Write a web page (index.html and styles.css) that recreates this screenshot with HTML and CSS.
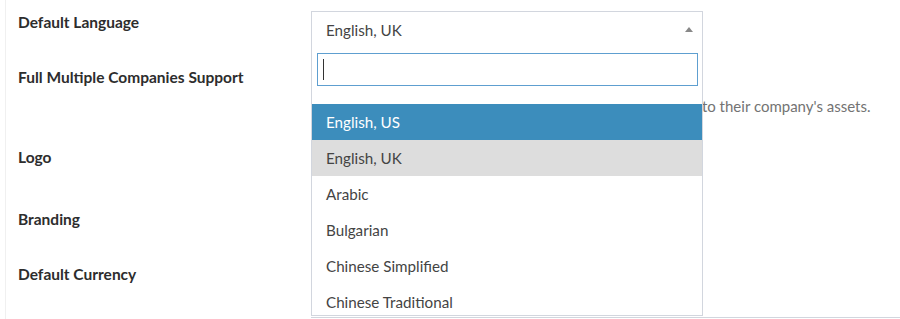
FILE: index.html
```html
<!DOCTYPE html>
<html lang="en">
<head>
  <meta charset="UTF-8" />
  <title>Settings</title>
  <link rel="stylesheet" href="styles.css">
</head>
<body>
  <div class="settings">
    <div class="row row-lang">
      <div class="row-label">Default Language</div>
      <div class="row-control">
        <div class="picker">
          <div class="picker-box">
            <span class="picker-value">English, UK</span>
            <span class="picker-arrow"></span>
          </div>
          <div class="picker-drop">
            <div class="picker-search">
              <div class="search-field"><span class="caret"></span></div>
            </div>
            <ul class="picker-options">
              <li class="is-active">English, US</li>
              <li class="is-selected">English, UK</li>
              <li>Arabic</li>
              <li>Bulgarian</li>
              <li>Chinese Simplified</li>
              <li>Chinese Traditional</li>
              <li>Croatian</li>
            </ul>
          </div>
        </div>
      </div>
    </div>

    <div class="row row-companies">
      <div class="row-label">Full Multiple Companies Support</div>
      <div class="row-control">
        <label class="check"><input type="checkbox"> Full Multiple Companies Support</label>
        <p class="help">Restricting users (including admins) assigned to companies to their company's assets.</p>
      </div>
    </div>

    <div class="row row-logo">
      <div class="row-label">Logo</div>
      <div class="row-control"></div>
    </div>

    <div class="row row-branding">
      <div class="row-label">Branding</div>
      <div class="row-control"></div>
    </div>

    <div class="row row-currency">
      <div class="row-label">Default Currency</div>
      <div class="row-control">
        <div class="currency-field"></div>
      </div>
    </div>
  </div>
</body>
</html>
```

FILE: styles.css
```css
body {
  margin: 0;
  font-family: Lato, 'Open Sans', sans-serif;
  background: #fff;
  color: #333;
  overflow: hidden;
}
.settings {
  margin-left: 5px;
  border-left: 1px solid #f0f0f0;
  padding: 11px 0 0 12px;
  height: 308px;
}
.row {
  display: flex;
}
.row-lang { height: 55px; }
.row-companies { height: 80px; }
.row-logo { height: 62px; }
.row-branding { height: 55px; }
.row-currency { height: 56px; }

.row-label {
  flex: 0 0 293px;
  font-size: 15.5px;
  font-weight: bold;
  line-height: 22px;
  color: #2d2d2d;
}
.row-control {
  flex: 1;
  min-width: 0;
}

/* language picker */
.picker {
  position: relative;
  width: 392px;
}
.picker-box {
  display: flex;
  align-items: center;
  justify-content: space-between;
  height: 36px;
  border: 1px solid #d2d6de;
  padding: 0 9px 0 14px;
  font-size: 15.2px;
  color: #444;
}
.picker-arrow {
  width: 0;
  height: 0;
  border-left: 4px solid transparent;
  border-right: 4px solid transparent;
  border-bottom: 5px solid #888;
  margin-bottom: 1px;
}
.picker-drop {
  position: absolute;
  top: 37px;
  left: 0;
  right: 0;
  z-index: 10;
  background: #fff;
  border: 1px solid #d2d6de;
  border-top: none;
}
.picker-search {
  padding: 5px 4px 18px 5px;
}
.search-field {
  height: 31px;
  border: 1px solid #5e9fd0;
  position: relative;
}
.caret {
  position: absolute;
  left: 5px;
  top: 5px;
  height: 21px;
  border-left: 1px solid #333;
}
.picker-options {
  list-style: none;
  margin: 0;
  padding: 0;
  max-height: 211px;
  overflow: hidden;
}
.picker-options li {
  height: 36px;
  line-height: 36px;
  padding-left: 14px;
  font-size: 15.2px;
  color: #444;
}
.picker-options .is-active {
  background: #3c8dbc;
  color: #fff;
}
.picker-options .is-selected {
  background: #ddd;
}

/* companies */
.check {
  display: block;
  line-height: 22px;
  font-size: 15px;
  color: #333;
}
.help {
  margin: 7px 0 0;
  padding-left: 5px;
  font-size: 15px;
  line-height: 22px;
  color: #737373;
  white-space: nowrap;
}

.currency-field {
  margin-top: 54px;
  border-top: 1px solid #d2d6de;
}
```
